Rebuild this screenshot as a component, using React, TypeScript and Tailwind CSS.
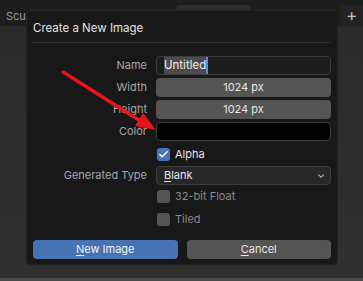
import { Check, ChevronDown } from 'lucide-react';

function Label({ text }: { text: string }) {
  return <div className="text-right text-[11px] text-[#a6a6a6]">{text}</div>;
}

function CheckRow({ label, checked, className }: { label: string; checked?: boolean; className: string }) {
  return (
    <div className={`grid grid-cols-[115px_175px] gap-[9px] h-[19px] items-center ${className}`}>
      <div />
      <div className="flex items-center gap-[5px] pl-[1px]">
        {checked ? (
          <div className="w-[13px] h-[13px] rounded-[3px] bg-[#4772b3] flex items-center justify-center">
            <Check size={11} strokeWidth={3} className="text-white" />
          </div>
        ) : (
          <div className="w-[13px] h-[13px] rounded-[3px] bg-[#545454]" />
        )}
        <span className={`text-[11px] ${checked ? 'text-[#e6e6e6]' : 'text-[#8a8a8a]'}`}>{label}</span>
      </div>
    </div>
  );
}

export default function App() {
  return (
    <div className="relative w-[363px] h-[281px] overflow-hidden bg-[#303030] font-['Inter',sans-serif] flex flex-col">
      {/* header strip behind the popup */}
      <div className="h-[26px] bg-[#1d1d1d] relative shrink-0">
        <span className="absolute left-[6px] top-[8px] text-[11px] text-[#9a9a9a]">Scu</span>
        <div className="absolute left-[176px] top-[5px] w-[75px] h-[21px] rounded-t-[4px] bg-[#2c2c2c]" />
        <div className="absolute left-[340px] top-[5px] w-[23px] h-[21px] rounded-tl-[4px] bg-[#232323] flex items-center justify-center text-[#bdbdbd] text-[17px] leading-none">
          +
        </div>
      </div>
      <div className="flex-1 bg-gradient-to-b from-[#2a2a2a] to-[#303030]" />
      <div className="h-[3px] bg-[#4a4a4a] shrink-0" />

      {/* popup */}
      <div className="absolute left-[26px] top-[10px] w-[312px] h-[255px] rounded-[4px] bg-[#181818] border border-[#222222] pl-[5px] pr-[6px]">
        <div className="pt-[9px] h-[31px] text-[11.5px] text-[#e3e3e3] pl-[1px]">Create a New Image</div>
        <div className="h-px bg-[#2e2e2e]" />

        <div className="mt-[13px] flex flex-col gap-[3px]">
          <div className="grid grid-cols-[115px_175px] gap-[9px] h-[19px] items-center">
            <Label text="Name" />
            <div className="h-[19px] rounded-[4px] border border-[#3d3d3d] bg-[#1d1d1d] flex items-center pl-[7px]">
              <span className="h-[17px] bg-[#4b4b4b] text-[11.5px] text-[#eeeeee] leading-[17px]">Untitled</span>
              <span className="w-[2px] h-[17px] bg-[#5a8de0]" />
            </div>
          </div>
          <div className="grid grid-cols-[115px_175px] gap-[9px] h-[19px] items-center">
            <Label text="Width" />
            <div className="h-[19px] rounded-[4px] bg-[#545454] flex items-center justify-center text-[11px] text-[#e6e6e6]">1024 px</div>
          </div>
          <div className="grid grid-cols-[115px_175px] gap-[9px] h-[19px] items-center">
            <Label text="Height" />
            <div className="h-[19px] rounded-[4px] bg-[#545454] flex items-center justify-center text-[11px] text-[#e6e6e6]">1024 px</div>
          </div>
          <div className="grid grid-cols-[115px_175px] gap-[9px] h-[19px] items-center">
            <Label text="Color" />
            <div className="h-[19px] rounded-[4px] border border-[#3d3d3d] bg-black" />
          </div>
        </div>

        <CheckRow label="Alpha" checked className="mt-[4px]" />

        <div className="mt-[2px] grid grid-cols-[115px_175px] gap-[9px] h-[19px] items-center">
          <Label text="Generated Type" />
          <div className="h-[19px] rounded-[4px] border border-[#3d3d3d] bg-[#282828] flex items-center justify-between pl-[7px] pr-[4px] text-[11px] text-[#e6e6e6]">
            <span>
              <u className="underline-offset-2">B</u>lank
            </span>
            <ChevronDown size={10} strokeWidth={2.5} className="text-[#cfcfcf]" />
          </div>
        </div>

        <CheckRow label="32-bit Float" className="mt-[2px]" />
        <CheckRow label="Tiled" className="mt-[4px]" />

        <div className="mt-[11px] grid grid-cols-2 gap-[9px] pl-[1px]">
          <div className="h-[19px] rounded-[4px] bg-[#4772b3] flex items-center justify-center text-[11px] text-[#f0f0f0]">
            <span>
              <u className="underline-offset-2">N</u>ew Image
            </span>
          </div>
          <div className="h-[19px] rounded-[4px] bg-[#545454] flex items-center justify-center text-[11px] text-[#e6e6e6]">
            <span>
              <u className="underline-offset-2">C</u>ancel
            </span>
          </div>
        </div>
      </div>

      {/* red annotation arrow */}
      <svg className="absolute left-0 top-0 pointer-events-none" width="363" height="281">
        <line x1="63" y1="72" x2="142" y2="122" stroke="#e5151d" strokeWidth="3.5" strokeLinecap="round" />
        <polygon points="156,130 135,126 143,113" fill="#e5151d" />
      </svg>
    </div>
  );
}
